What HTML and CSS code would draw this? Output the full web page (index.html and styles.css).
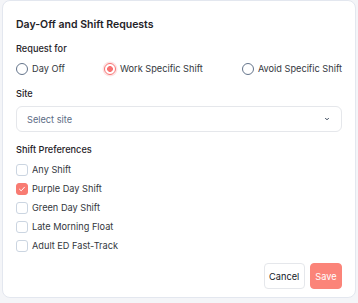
FILE: index.html
```html
<!DOCTYPE html>
<html lang="en">
<head>
    <meta charset="UTF-8">
    <title>Day-Off and Shift Requests</title>
    <link rel="stylesheet" href="styles.css">
</head>
<body>
    <div class="modal">
        <h2 class="modal-title">Day-Off and Shift Requests</h2>

        <div class="field">
            <div class="field-label">Request for</div>
            <div class="radio-row">
                <label class="radio"><span class="radio-dot"></span>Day Off</label>
                <label class="radio"><span class="radio-dot checked"></span>Work Specific Shift</label>
                <label class="radio"><span class="radio-dot"></span>Avoid Specific Shift</label>
            </div>
        </div>

        <div class="field">
            <div class="field-label site-label">Site</div>
            <div class="select">
                <span>Select site</span>
                <svg width="8" height="8" viewBox="0 0 8 8"><path d="M2.5 3.3l1.5 1.5 1.5-1.5" fill="none" stroke="#334155" stroke-width="1" stroke-linecap="round" stroke-linejoin="round"/></svg>
            </div>
        </div>

        <div class="field">
            <div class="field-label">Shift Preferences</div>
            <div class="check-list">
                <label class="check"><span class="check-box"></span>Any Shift</label>
                <label class="check"><span class="check-box checked"><svg width="8" height="8" viewBox="0 0 8 8"><path d="M1.5 4.2l1.7 1.6 3.3-3.6" fill="none" stroke="#fff" stroke-width="1" stroke-linecap="round" stroke-linejoin="round"/></svg></span>Purple Day Shift</label>
                <label class="check"><span class="check-box"></span>Green Day Shift</label>
                <label class="check"><span class="check-box"></span>Late Morning Float</label>
                <label class="check"><span class="check-box"></span>Adult ED Fast-Track</label>
            </div>
        </div>

        <div class="actions">
            <button class="btn btn-cancel">Cancel</button>
            <button class="btn btn-save">Save</button>
        </div>
    </div>
</body>
</html>
```

FILE: styles.css
```css
body {
    margin: 0;
    padding: 0 2px 0 2px;
    background-color: #f4f5f8;
    font-family: Inter, "Noto Sans", sans-serif;
    color: #1f2937;
}
.modal {
    background-color: white;
    border: 1px solid #e3e7ef;
    border-radius: 8px;
    padding: 15px 13px 8px 13px;
}
.modal-title {
    margin: 0 0 8px 0;
    font-size: 10.5px;
    font-weight: 600;
    line-height: 18px;
    color: #1f2328;
}
.field {
    margin-bottom: 11px;
}
.field-label {
    font-size: 9.2px;
    font-weight: 500;
    line-height: 14px;
    margin-bottom: 6px;
    color: #1f2328;
}
.site-label {
    margin-bottom: 5px;
}
.radio-row {
    display: flex;
    justify-content: space-between;
}
.radio, .check {
    display: flex;
    align-items: center;
    gap: 4px;
    font-size: 9.2px;
    line-height: 14px;
    color: #33373d;
}
.radio-dot {
    width: 10px;
    height: 10px;
    border: 1px solid #64748b;
    border-radius: 50%;
}
.radio-dot.checked {
    border-color: #f87171;
    background: radial-gradient(circle, #f87171 0 2.6px, white 3.2px);
    box-shadow: 0 0 0 1.5px #fde4e4;
}
.select {
    display: flex;
    justify-content: space-between;
    align-items: center;
    height: 24px;
    padding: 0 10px 0 10px;
    border: 1px solid #e5e7eb;
    border-radius: 6px;
    font-size: 9.2px;
    color: #5b6b84;
}
.check-list {
    display: flex;
    flex-direction: column;
    gap: 5px;
}
.check-box {
    width: 10px;
    height: 10px;
    border: 1px solid #cbd5e1;
    border-radius: 3px;
    display: flex;
    align-items: center;
    justify-content: center;
}
.check-box.checked {
    background-color: #f87b72;
    border-color: #f87b72;
}
.actions {
    display: flex;
    justify-content: flex-end;
    gap: 5px;
    margin-top: -1px;
}
.btn {
    font-family: inherit;
    font-size: 9.2px;
    height: 26px;
    padding: 0 4.5px;
    border-radius: 4px;
}
.btn-cancel {
    background: white;
    border: 1px solid #e5e7eb;
    color: #111827;
}
.btn-save {
    background-color: #fb8479;
    border: 1px solid #fb8479;
    color: white;
}
```
